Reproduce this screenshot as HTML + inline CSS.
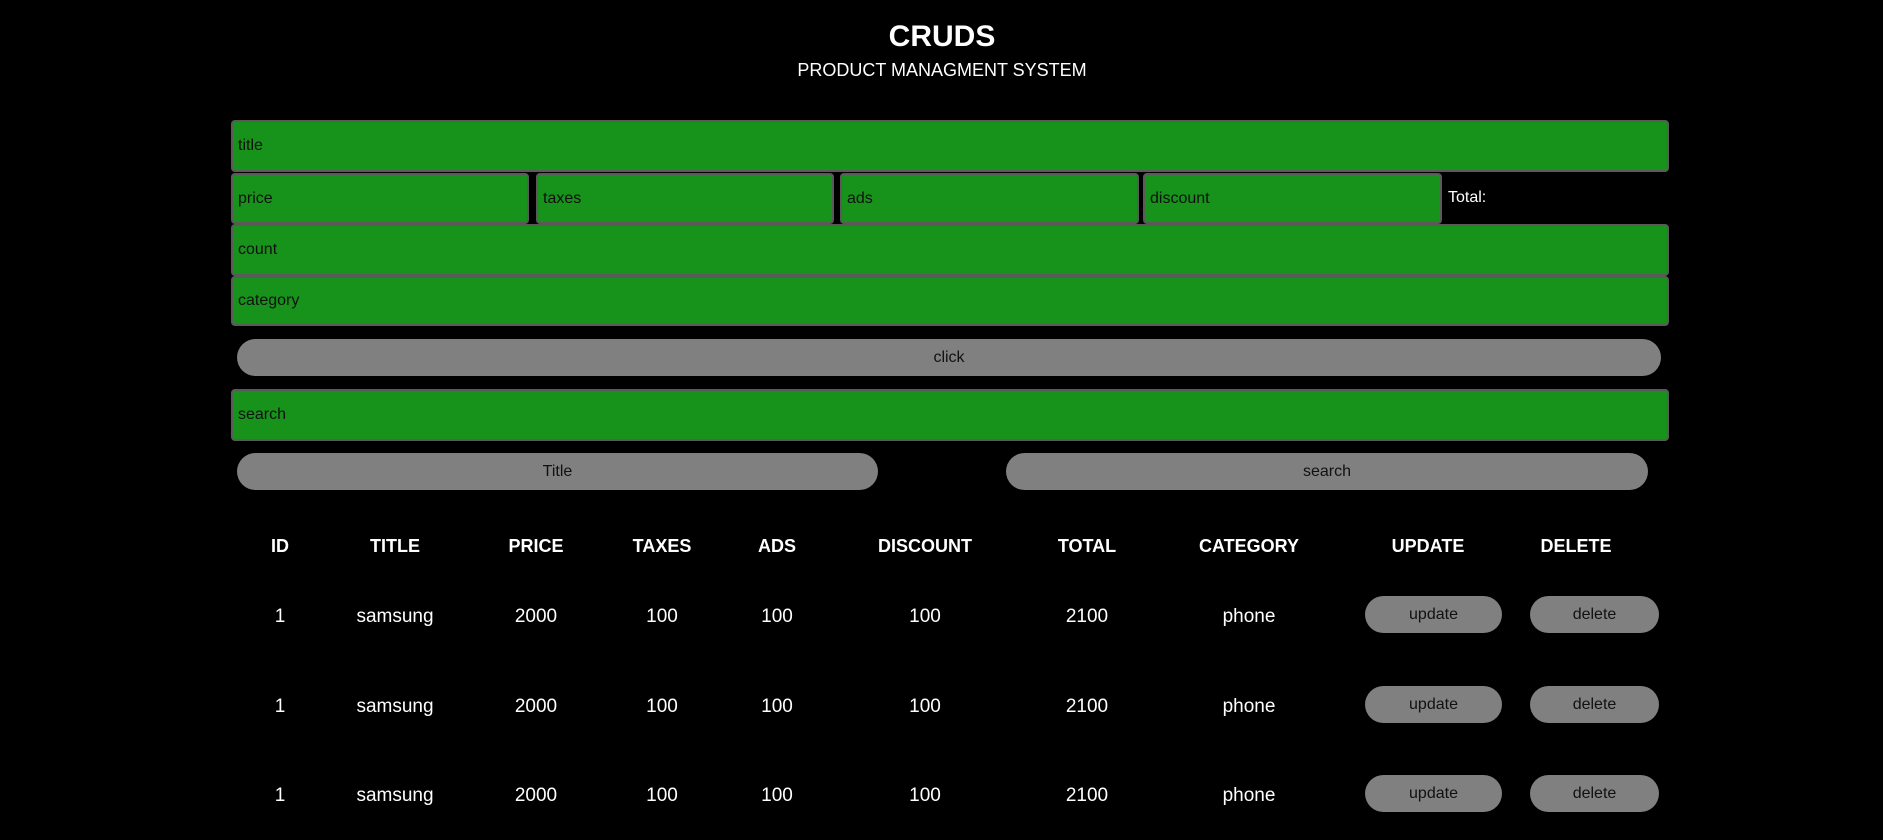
<!DOCTYPE html>
<html><head><meta charset="utf-8"><style>
*{margin:0;padding:0;box-sizing:border-box}
body{width:1883px;height:840px;background:#000;color:#fff;font-family:"Liberation Sans",sans-serif;position:relative;overflow:hidden}
.a{position:absolute}
.in{position:absolute;background:#17921a;border:2px solid #5a5a5a;border-radius:4px;color:#111;font-size:16px;padding-left:5px;display:flex;align-items:center}
.bt{position:absolute;background:#808080;border-radius:20px;color:#111;font-size:16px;display:flex;align-items:center;justify-content:center}
.c{position:absolute;transform:translateX(-50%);white-space:nowrap}
.h{font-weight:bold;font-size:18px;top:536px}
.d{font-size:19px}
</style></head><body>
<div class="c" style="left:942px;top:20px;font-size:30px;font-weight:bold">CRUDS</div>
<div class="c" style="left:942px;top:60px;font-size:18px">PRODUCT MANAGMENT SYSTEM</div>

<div class="in" style="left:231px;top:120px;width:1438px;height:52px">title</div>
<div class="in" style="left:231px;top:173px;width:298px;height:51px">price</div>
<div class="in" style="left:536px;top:173px;width:298px;height:51px">taxes</div>
<div class="in" style="left:840px;top:173px;width:299px;height:51px">ads</div>
<div class="in" style="left:1143px;top:173px;width:299px;height:51px">discount</div>
<div class="a" style="left:1448px;top:189px;font-size:16px">Total:</div>
<div class="in" style="left:231px;top:224px;width:1438px;height:52px">count</div>
<div class="in" style="left:231px;top:276px;width:1438px;height:50px">category</div>
<div class="bt" style="left:237px;top:339px;width:1424px;height:37px">click</div>
<div class="in" style="left:231px;top:389px;width:1438px;height:52px">search</div>
<div class="bt" style="left:237px;top:453px;width:641px;height:37px">Title</div>
<div class="bt" style="left:1006px;top:453px;width:642px;height:37px">search</div>

<div class="c h" style="left:280px">ID</div>
<div class="c h" style="left:395px">TITLE</div>
<div class="c h" style="left:536px">PRICE</div>
<div class="c h" style="left:662px">TAXES</div>
<div class="c h" style="left:777px">ADS</div>
<div class="c h" style="left:925px">DISCOUNT</div>
<div class="c h" style="left:1087px">TOTAL</div>
<div class="c h" style="left:1249px">CATEGORY</div>
<div class="c h" style="left:1428px">UPDATE</div>
<div class="c h" style="left:1576px">DELETE</div>

<div id="rows"></div>
<script>
var ys=[606,696,785],h='';
ys.forEach(function(y){
 var v=[[280,'1'],[395,'samsung'],[536,'2000'],[662,'100'],[777,'100'],[925,'100'],[1087,'2100'],[1249,'phone']];
 v.forEach(function(p){h+='<div class="c d" style="left:'+p[0]+'px;top:'+y+'px">'+p[1]+'</div>';});
 h+='<div class="bt" style="left:1365px;top:'+(y-10)+'px;width:137px;height:37px">update</div>';
 h+='<div class="bt" style="left:1530px;top:'+(y-10)+'px;width:129px;height:37px">delete</div>';
});
document.getElementById('rows').innerHTML=h;
</script>
</body></html>
